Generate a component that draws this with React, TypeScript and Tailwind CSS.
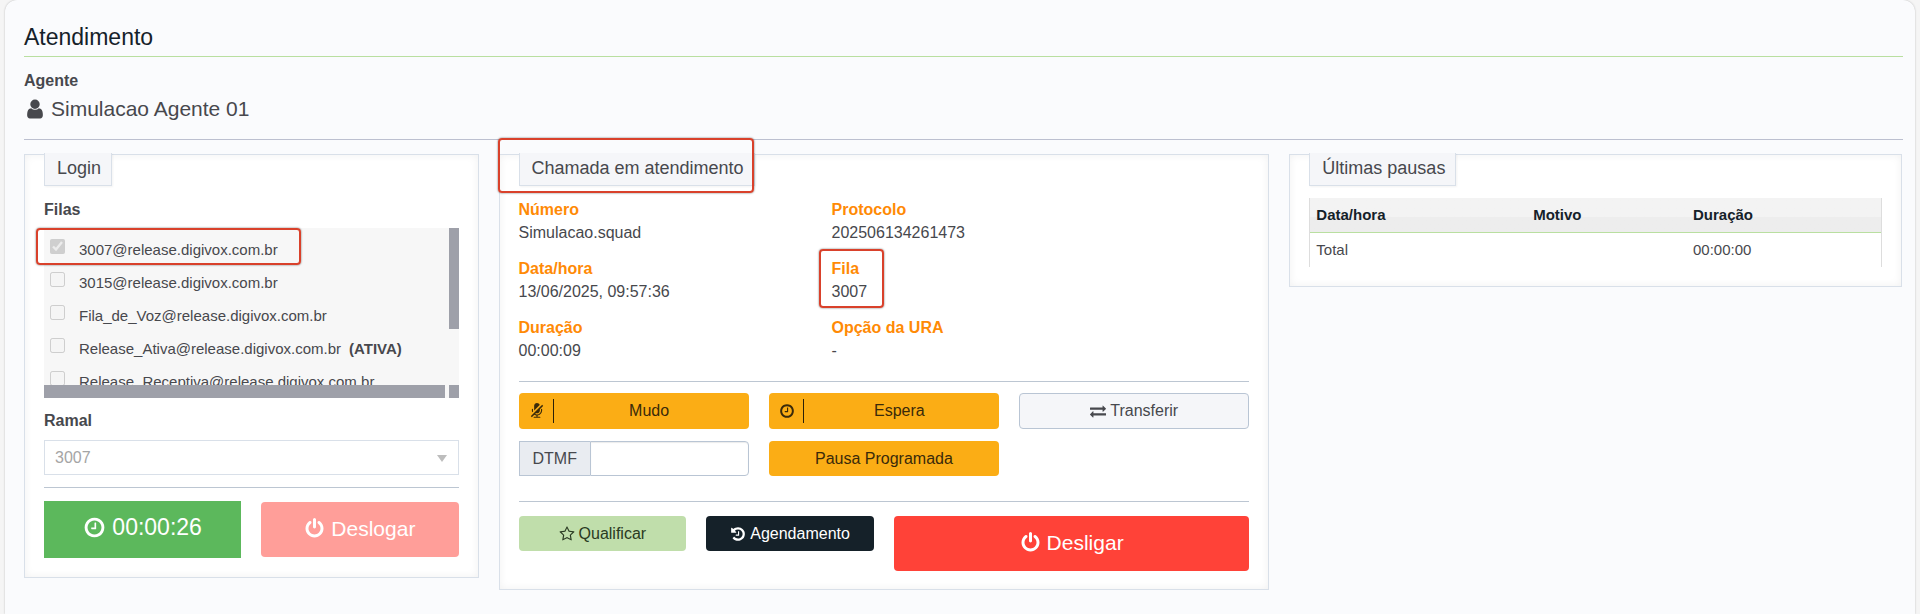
import { useState } from "react";
import type { ReactNode } from "react";
import clsx from "clsx";

const icons = {
  user: "M1536 1399q0 109-62.5 187t-150.5 78h-854q-88 0-150.5-78t-62.5-187q0-85 8.5-160.5t31.5-152 58.5-131 94-89 134.5-34.5q131 128 313 128t313-128q76 0 134.5 34.5t94 89 58.5 131 31.5 152 8.5 160.5zm-256-887q0 159-112.5 271.5t-271.5 112.5-271.5-112.5-112.5-271.5 112.5-271.5 271.5-112.5 271.5 112.5 112.5 271.5z",
  clock: "M1024 544v448q0 14-9 23t-23 9h-320q-14 0-23-9t-9-23v-64q0-14 9-23t23-9h224v-352q0-14 9-23t23-9h64q14 0 23 9t9 23zm416 352q0-148-73-273t-198-198-273-73-273 73-198 198-73 273 73 273 198 198 273 73 273-73 198-198 73-273zm224 0q0 209-103 385.5t-279.5 279.5-385.5 103-385.5-103-279.5-279.5-103-385.5 103-385.5 279.5-279.5 385.5-103 385.5 103 279.5 279.5 103 385.5z",
  power: "M1664 896q0 156-61 298t-164 245-245 164-298 61-298-61-245-164-164-245-61-298q0-182 80.5-343t226.5-270q43-32 95.5-25t83.5 50q32 42 24.5 94.5t-49.5 84.5q-98 74-151.5 181t-53.5 228q0 104 40.5 198.5t109.5 163.5 163.5 109.5 198.5 40.5 198.5-40.5 163.5-109.5 109.5-163.5 40.5-198.5q0-121-53.5-228t-151.5-181q-42-32-49.5-84.5t24.5-94.5q31-43 84-50t95 25q146 109 226.5 270t80.5 343zm-640-768v640q0 52-38 90t-90 38-90-38-38-90v-640q0-52 38-90t90-38 90 38 38 90z",
  history: "M1664 896q0 156-61 298t-164 245-245 164-298 61q-172 0-327-72.5t-264-204.5q-7-10-6.5-22.5t8.5-20.5l137-138q10-9 25-9 16 2 23 12 73 95 179 147t225 52q104 0 198.5-40.5t163.5-109.5 109.5-163.5 40.5-198.5-40.5-198.5-109.5-163.5-163.5-109.5-198.5-40.5q-98 0-188 35.5t-160 101.5l137 138q31 30 14 69-17 40-59 40h-448q-26 0-45-19t-19-45v-448q0-42 40-59 39-17 69 14l130 129q107-101 244.5-156.5t284.5-55.5q156 0 298 61t245 164 164 245 61 298zm-640-288v448q0 14-9 23t-23 9h-320q-14 0-23-9t-9-23v-64q0-14 9-23t23-9h224v-352q0-14 9-23t23-9h64q14 0 23 9t9 23z",
  star: "M1201 1004l306-297-422-62-189-382-189 382-422 62 306 297-73 421 378-199 377 199zm527-357q0 22-26 48l-363 354 86 500q1 7 1 20 0 50-41 50-19 0-40-12l-449-236-449 236q-22 12-40 12-21 0-31.5-14.5t-10.5-35.5q0-6 2-20l86-500-364-354q-25-27-25-48 0-37 56-46l502-73 225-455q19-41 49-41t49 41l225 455 502 73q56 9 56 46z",
  exchange: "M1792 1184v192q0 13-9.5 22.5t-22.5 9.5h-1376v192q0 13-9.5 22.5t-22.5 9.5q-12 0-24-10l-319-320q-9-9-9-22 0-14 9-23l320-320q9-9 23-9 13 0 22.5 9.5t9.5 22.5v192h1376q13 0 22.5 9.5t9.5 22.5zm0-544q0 14-9 23l-320 320q-9 9-23 9-13 0-22.5-9.5t-9.5-22.5v-192h-1376q-13 0-22.5-9.5t-9.5-22.5v-192q0-13 9.5-22.5t22.5-9.5h1376v-192q0-14 9-23t23-9q12 0 24 10l319 319q9 9 9 23z",
  mute: "M463 945l-101 101q-42-103-42-214v-128q0-26 19-45t45-19 45 19 19 45v128q0 53 15 113zm1114-602l-361 361v128q0 132-94 226t-226 94q-55 0-109-19l-96 96q97 51 205 51 185 0 316.5-131.5t131.5-316.5v-128q0-26 19-45t45-19 45 19 19 45v128q0 221-147.5 384.5t-364.5 187.5v132h256q26 0 45 19t19 45-19 45-45 19h-640q-26 0-45-19t-19-45 19-45 45-19h256v-132q-125-13-235-81l-254 254q-10 10-23 10t-23-10l-82-82q-10-10-10-23t10-23l1234-1234q10-10 23-10t23 10l82 82q10 10 10 23t-10 23zm-380-132l-621 621v-512q0-132 94-226t226-94q102 0 184.5 59t116.5 152z",
};

function Icon({ name, className }: { name: keyof typeof icons; className: string }) {
  return (
    <svg viewBox="0 0 1792 1792" fill="currentColor" aria-hidden="true" className={clsx("shrink-0 overflow-visible", className)}>
      <path d={icons[name]} />
    </svg>
  );
}

const queues = [
  { name: "3007@release.digivox.com.br", checked: true },
  { name: "3015@release.digivox.com.br" },
  { name: "Fila_de_Voz@release.digivox.com.br" },
  { name: "Release_Ativa@release.digivox.com.br", active: true },
  { name: "Release_Receptiva@release.digivox.com.br" },
];

const callFields = [
  { label: "Número", value: "Simulacao.squad" },
  { label: "Protocolo", value: "202506134261473" },
  { label: "Data/hora", value: "13/06/2025, 09:57:36" },
  { label: "Fila", value: "3007", marked: true },
  { label: "Duração", value: "00:00:09" },
  { label: "Opção da URA", value: "-" },
];

function Marker({ className }: { className: string }) {
  return (
    <span
      className={clsx(
        "pointer-events-none absolute rounded-[4px] border-2 border-[#d9412b] shadow-[0_0_2px_rgba(0,0,0,0.6)]",
        className
      )}
    />
  );
}

function Panel({ title, marked, className, children }: { title: string; marked?: boolean; className?: string; children: ReactNode }) {
  return (
    <section
      className={clsx(
        "relative border border-[#d9e0e9] bg-white px-[19px] shadow-[inset_0_0_8px_rgba(0,0,0,0.06)]",
        className
      )}
    >
      <h2 className="-mt-0.5 w-fit border border-t-0 border-[#d9e0e9] bg-[#f5f6f9] pt-0.5 pr-2.5 pb-1 pl-3 text-[18px] leading-[26px] shadow-[1px_1px_2px_rgba(0,0,0,0.05)]">
        {title}
      </h2>
      {marked && <Marker className="-top-[17px] -left-0.5 h-[55px] w-[256px]" />}
      {children}
    </section>
  );
}

function LoginPanel() {
  return (
    <Panel title="Login" className="pb-[19px]">
      <h3 className="mt-3 text-base font-bold">Filas</h3>
      <div className="relative mt-1.5">
        <div className="grid h-[170px] grid-cols-[1fr_10px] grid-rows-[1fr_13px] bg-[#f7f7f7]">
          <ul className="h-[157px] overflow-hidden pl-1.5">
            {queues.map((q) => (
              <li key={q.name} className="h-[33px] pt-[11px]">
                <label className="flex items-start gap-3.5 text-[15px] leading-[22px] whitespace-nowrap">
                  <input type="checkbox" disabled defaultChecked={q.checked} className="m-0 size-[15px] shrink-0" />
                  <span>
                    {q.name}
                    {q.active && <strong className="ml-2">(ATIVA)</strong>}
                  </span>
                </label>
              </li>
            ))}
          </ul>
          <div className="h-[101px] bg-[#9ea0a9]" />
          <div className="mr-1 bg-[#9ea0a9]" />
          <div className="bg-[#9ea0a9]" />
        </div>
        <Marker className="top-0 -left-2 h-[37px] w-[265px]" />
      </div>

      <label htmlFor="ramal" className="mt-[11px] block text-base font-bold">
        Ramal
      </label>
      <div className="relative mt-[7px]">
        <select
          id="ramal"
          disabled
          className="block h-[35px] w-full appearance-none border border-[#d9e0e9] bg-white px-2.5 text-base text-[#a5a5a5]"
        >
          <option>3007</option>
        </select>
        <svg viewBox="0 0 10 7" className="pointer-events-none absolute top-[15px] right-3 h-[7px] w-[10px] fill-[#bdbdbd]">
          <path d="M0 0h10L5 7z" />
        </svg>
      </div>

      <hr className="mt-3 border-[#bcc6d2]" />
      <div className="mt-[13px] grid grid-cols-2 items-center gap-5">
        <div className="flex h-[57px] items-center justify-center gap-1.5 bg-[#5cb85c] pb-1 text-[23px] text-white">
          <Icon name="clock" className="size-[23px]" />
          00:00:26
        </div>
        <button
          type="button"
          disabled
          className="flex h-[55px] items-center justify-center gap-1.5 rounded-[4px] bg-[#ff9e99] pb-0.5 text-[21px] text-white"
        >
          <Icon name="power" className="size-[21px]" />
          Deslogar
        </button>
      </div>
    </Panel>
  );
}

function CallPanel() {
  const [dtmf, setDtmf] = useState("");

  return (
    <Panel title="Chamada em atendimento" marked className="pb-[18px]">
      <dl className="mt-3 grid grid-cols-[313px_1fr] gap-y-[13px]">
        {callFields.map((f) => (
          <div key={f.label} className="relative">
            <dt className="font-bold text-[#ff8a05]">{f.label}</dt>
            <dd className="leading-[22px]">{f.value}</dd>
            {f.marked && <Marker className="-top-2 -left-[13px] h-[59px] w-[65px]" />}
          </div>
        ))}
      </dl>

      <hr className="mt-[19px] border-[#bcc6d2]" />
      <div className="mt-[11px] grid grid-cols-3 gap-x-5 gap-y-3">
        <button type="button" className="flex h-9 items-center rounded-[4px] bg-[#fbad15] pl-2.5 text-[#3a2a0a]">
          <Icon name="mute" className="size-4" />
          <span className="ml-2 h-6 w-px bg-[#2b2008]" />
          <span className="flex-1 pr-1 text-center">Mudo</span>
        </button>
        <button type="button" className="flex h-9 items-center rounded-[4px] bg-[#fbad15] pl-2.5 text-[#3a2a0a]">
          <Icon name="clock" className="size-4" />
          <span className="ml-2 h-6 w-px bg-[#2b2008]" />
          <span className="flex-1 pr-1 text-center">Espera</span>
        </button>
        <button
          type="button"
          className="flex h-9 items-center justify-center gap-1 rounded-[4px] border border-[#b9c5d4] bg-[#f5f6f9]"
        >
          <Icon name="exchange" className="size-4" />
          Transferir
        </button>
        <div className="flex h-[35px]">
          <label
            htmlFor="dtmf"
            className="flex items-center border border-r-0 border-[#b9c5d4] bg-[#e9ecf1] px-[13px]"
          >
            DTMF
          </label>
          <input
            id="dtmf"
            type="text"
            value={dtmf}
            onChange={(e) => setDtmf(e.target.value)}
            className="w-0 flex-1 rounded-r-[4px] border border-[#b9c5d4] bg-white px-2 shadow-[inset_0_1px_1px_rgba(0,0,0,0.08)]"
          />
        </div>
        <button type="button" className="h-[35px] rounded-[4px] bg-[#fbad15] text-[#3a2a0a]">
          Pausa Programada
        </button>
      </div>

      <hr className="mt-[25px] border-[#bcc6d2]" />
      <div className="mt-3.5 grid grid-cols-4 items-start gap-5">
        <button
          type="button"
          className="flex h-[35px] items-center justify-center gap-1 rounded-[4px] bg-[#c0deab] text-[#2a3a22]"
        >
          <Icon name="star" className="size-4" />
          Qualificar
        </button>
        <button
          type="button"
          className="flex h-[35px] items-center justify-center gap-1 rounded-[4px] bg-[#152129] text-white"
        >
          <Icon name="history" className="size-4" />
          Agendamento
        </button>
        <button
          type="button"
          className="col-span-2 flex h-[55px] items-center justify-center gap-1.5 rounded-[4px] bg-[#ff4238] pb-0.5 text-[21px] text-white"
        >
          <Icon name="power" className="size-[21px]" />
          Desligar
        </button>
      </div>
    </Panel>
  );
}

function PausesPanel() {
  return (
    <Panel title="Últimas pausas" className="pb-[19px]">
      <table className="mt-3 w-full table-fixed border-separate border-spacing-0 border-x border-[#dddddd] text-left text-[15px] leading-[22px]">
        <thead>
          <tr className="bg-linear-to-b from-[#f3f3f3] from-55% to-[#ededed] to-55% text-[#152129]">
            <th className="w-[38%] border-b border-[#b9dfa0] px-1.5 py-1.5">Data/hora</th>
            <th className="w-[28%] border-b border-[#b9dfa0] px-1.5 py-1.5">Motivo</th>
            <th className="border-b border-[#b9dfa0] px-1.5 py-1.5">Duração</th>
          </tr>
        </thead>
        <tbody>
          <tr>
            <td className="px-1.5 py-1.5">Total</td>
            <td />
            <td className="px-1.5 py-1.5">00:00:00</td>
          </tr>
        </tbody>
      </table>
    </Panel>
  );
}

export default function App() {
  return (
    <div className="min-h-screen bg-[#f5f5f5] px-[5px] font-['Liberation_Sans',Arial,sans-serif] text-base text-[#47484d]">
      <main className="min-h-screen rounded-t-xl bg-[#fafbfd] pt-[21px] pr-3 pl-[19px] shadow-[0_0_2px_rgba(0,0,0,0.25)]">
        <h1 className="border-b border-[#b9dfa0] pb-[3px] text-[23px] leading-8 text-[#152129]">Atendimento</h1>

        {/* Agent */}
        <div className="mt-3 font-bold">Agente</div>
        <div className="flex h-8 items-center gap-[5px] text-[21px]">
          <Icon name="user" className="size-[22px]" />
          Simulacao Agente 01
        </div>
        <hr className="mt-3.5 border-[#bcc0d0]" />

        <div className="mt-3.5 -mr-[9px] -ml-2.5 flex items-start pb-5">
          <div className="w-3/12 px-2.5">
            <LoginPanel />
          </div>
          <div className="w-5/12 px-2.5">
            <CallPanel />
          </div>
          <div className="w-4/12 px-2.5">
            <PausesPanel />
          </div>
        </div>
      </main>
    </div>
  );
}
